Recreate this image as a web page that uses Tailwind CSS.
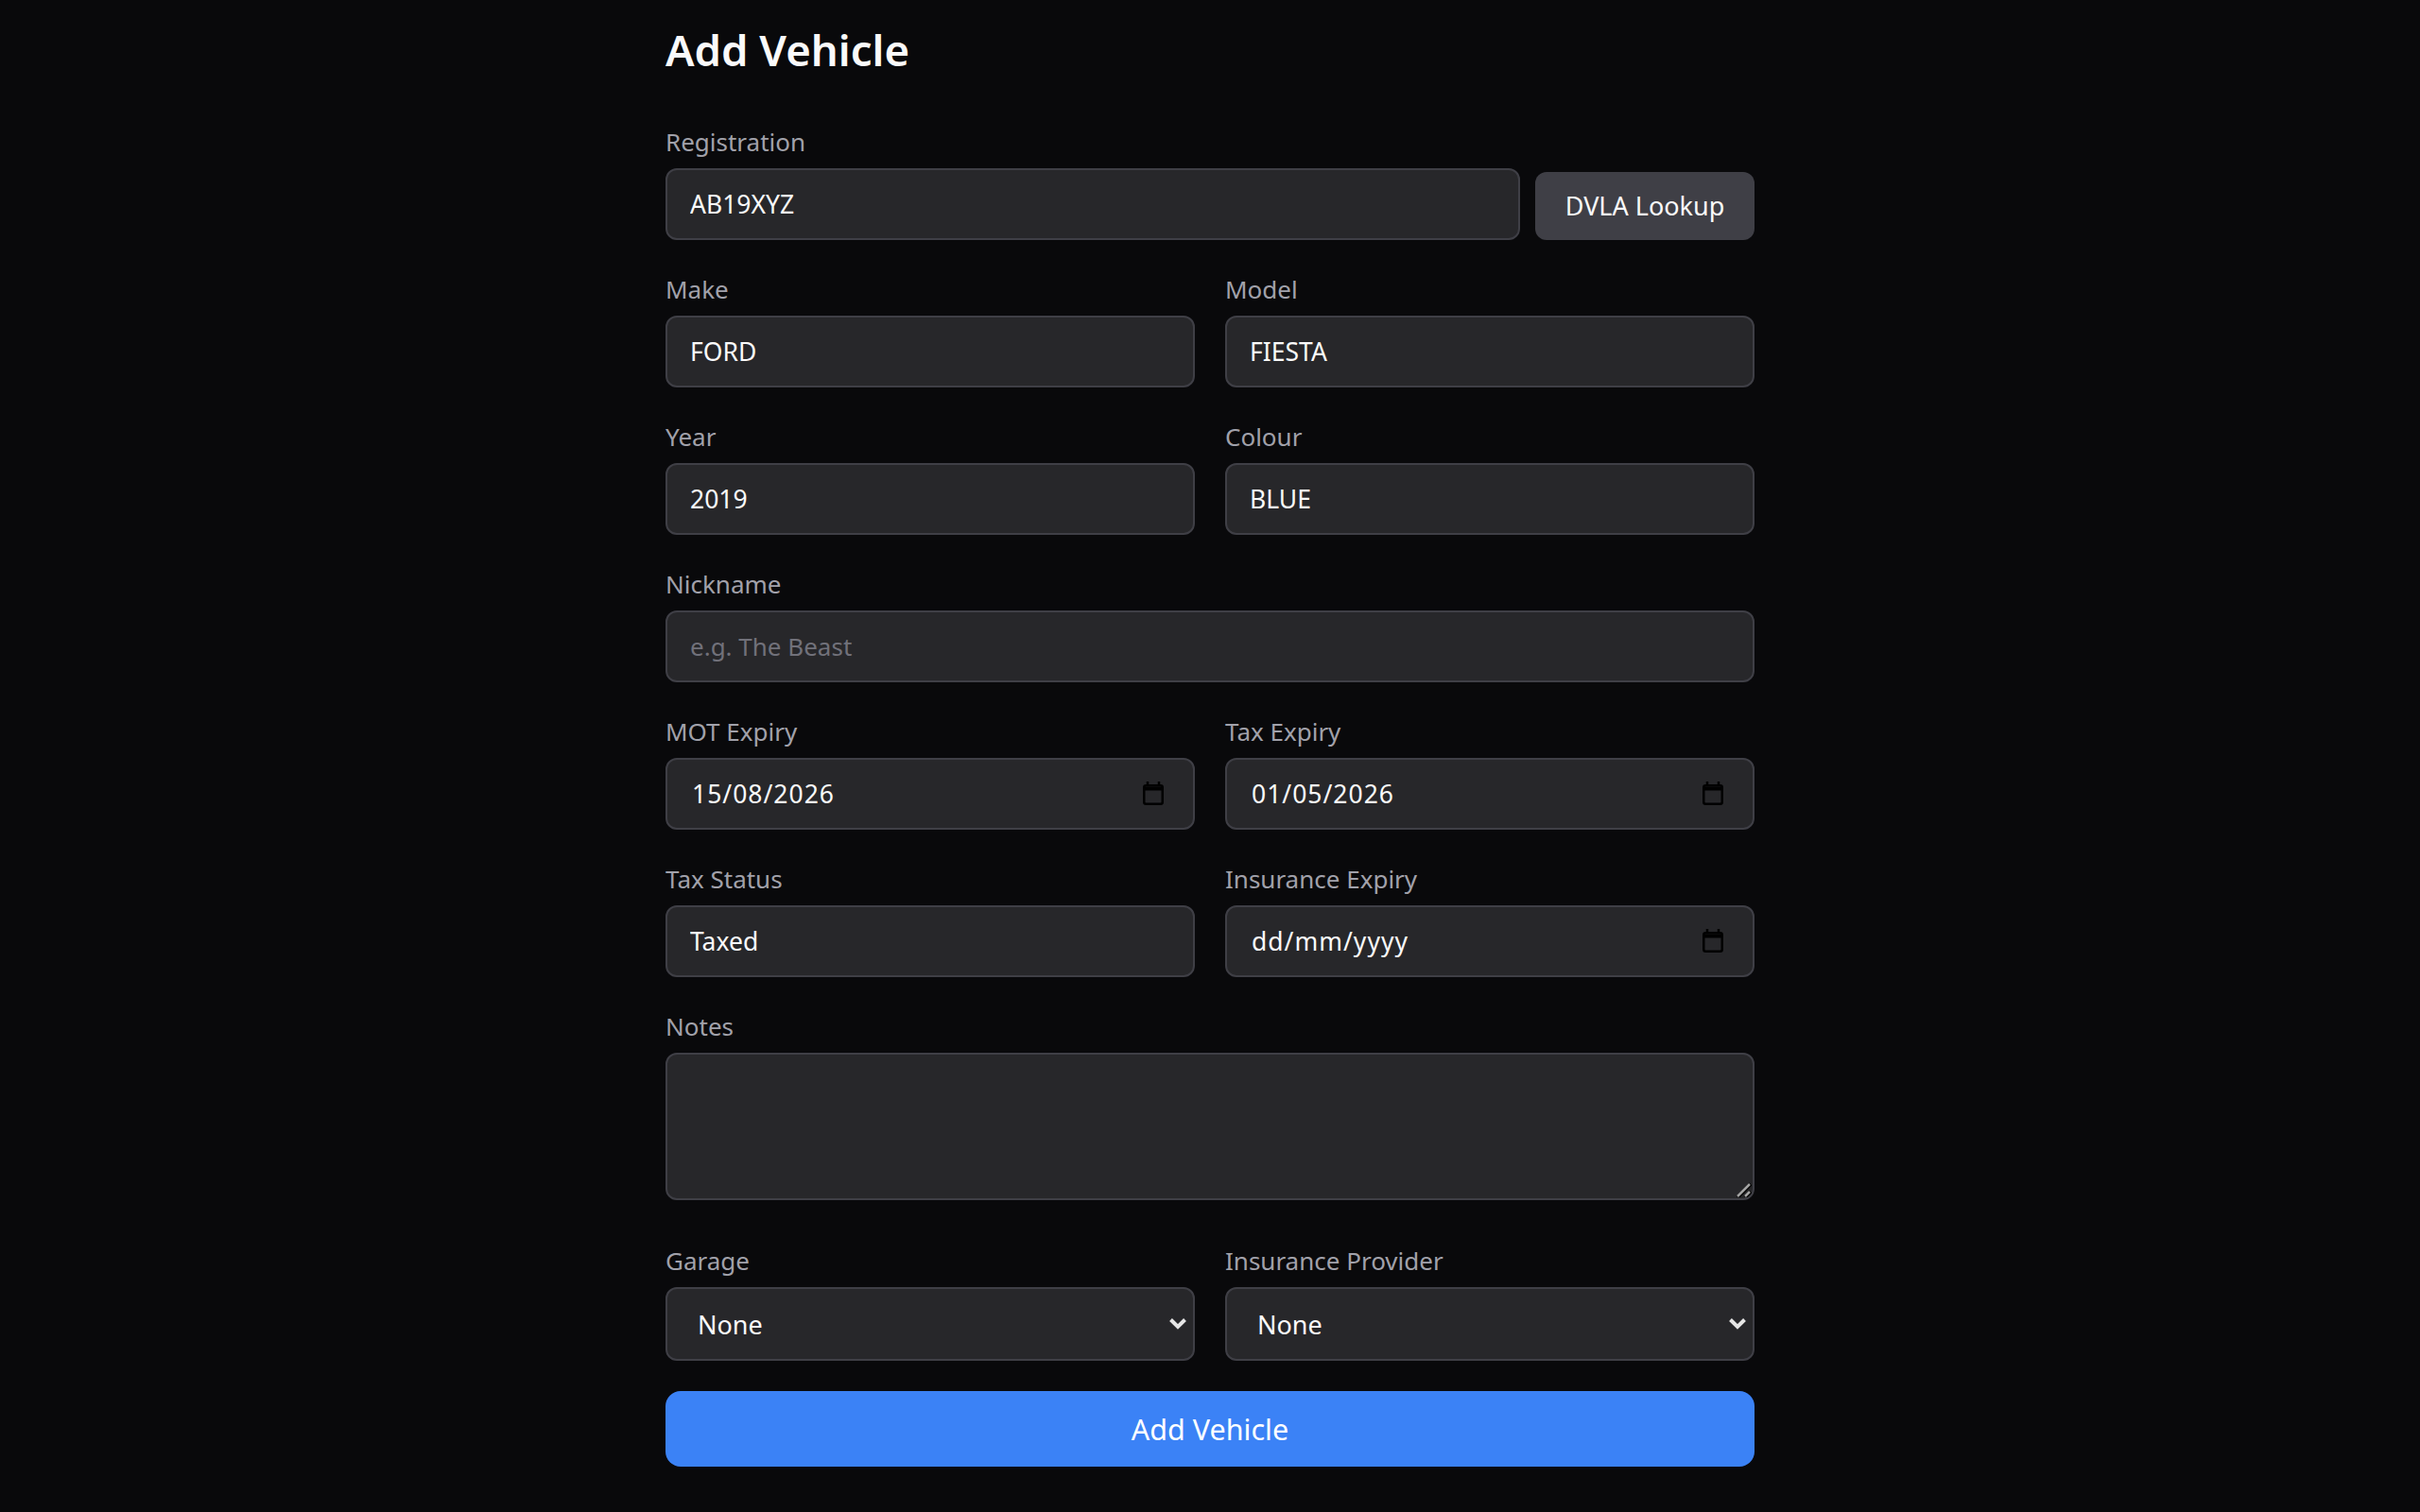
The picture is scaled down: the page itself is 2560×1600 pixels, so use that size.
<!DOCTYPE html>
<html lang="en">
<head>
    <meta charset="UTF-8">
    <meta name="viewport" content="width=device-width, initial-scale=1.0">
    <script src="https://cdn.jsdelivr.net/npm/@tailwindcss/browser@4"></script>
    <title>Add Vehicle</title>
</head>
<body class="bg-[#09090b] text-[#fafafa] font-['Noto_Sans',sans-serif] h-[1600px] overflow-hidden">
<div class="w-[1152px] mx-auto pt-[20px]">
    <h1 class="text-[45.5px] leading-[64px] font-semibold mb-[46px]">Add Vehicle</h1>

    <form class="flex flex-col gap-8">
        <div>
            <label class="block text-[26px] leading-[40px] mb-2 text-[#a1a1aa]">Registration</label>
            <div class="flex items-end gap-4">
                <input type="text" value="AB19XYZ" class="flex-1 min-w-0 h-[76px] px-6 bg-[#27272a] border-2 border-[#3f3f46] rounded-xl text-[26.5px] outline-none">
                <button type="button" class="w-[232px] h-[72px] bg-[#3f3f46] rounded-xl text-[27px] text-[#fafafa]">DVLA Lookup</button>
            </div>
        </div>

        <div class="grid grid-cols-2 gap-8">
            <div>
                <label class="block text-[26px] leading-[40px] mb-2 text-[#a1a1aa]">Make</label>
                <input type="text" value="FORD" class="w-full h-[76px] px-6 bg-[#27272a] border-2 border-[#3f3f46] rounded-xl text-[26.5px] outline-none">
            </div>
            <div>
                <label class="block text-[26px] leading-[40px] mb-2 text-[#a1a1aa]">Model</label>
                <input type="text" value="FIESTA" class="w-full h-[76px] px-6 bg-[#27272a] border-2 border-[#3f3f46] rounded-xl text-[26.5px] outline-none">
            </div>
        </div>

        <div class="grid grid-cols-2 gap-8">
            <div>
                <label class="block text-[26px] leading-[40px] mb-2 text-[#a1a1aa]">Year</label>
                <input type="text" value="2019" class="w-full h-[76px] px-6 bg-[#27272a] border-2 border-[#3f3f46] rounded-xl text-[26.5px] outline-none">
            </div>
            <div>
                <label class="block text-[26px] leading-[40px] mb-2 text-[#a1a1aa]">Colour</label>
                <input type="text" value="BLUE" class="w-full h-[76px] px-6 bg-[#27272a] border-2 border-[#3f3f46] rounded-xl text-[26.5px] outline-none">
            </div>
        </div>

        <div>
            <label class="block text-[26px] leading-[40px] mb-2 text-[#a1a1aa]">Nickname</label>
            <input type="text" placeholder="e.g. The Beast" class="w-full h-[76px] px-6 bg-[#27272a] border-2 border-[#3f3f46] rounded-xl text-[26px] outline-none placeholder:text-[#71717a]">
        </div>

        <div class="grid grid-cols-2 gap-8">
            <div>
                <label class="block text-[26px] leading-[40px] mb-2 text-[#a1a1aa]">MOT Expiry</label>
                <div class="flex items-center h-[76px] pl-[26px] pr-[31px] bg-[#27272a] border-2 border-[#3f3f46] rounded-xl">
                    <input type="text" value="15/08/2026" class="flex-1 min-w-0 pt-[2px] text-[26.5px] tracking-[1px] outline-none">
                    <svg class="w-[22px] h-[25px] mb-[1px]" viewBox="0 0 22 25" fill="none" stroke="#000"><rect x="1.25" y="4.25" width="19.5" height="19.5" rx="2" stroke-width="2.5"/><path d="M1 7.5h20" stroke-width="4"/><path d="M5 0v5M17 0v5" stroke-width="2.5"/></svg>
                </div>
            </div>
            <div>
                <label class="block text-[26px] leading-[40px] mb-2 text-[#a1a1aa]">Tax Expiry</label>
                <div class="flex items-center h-[76px] pl-[26px] pr-[31px] bg-[#27272a] border-2 border-[#3f3f46] rounded-xl">
                    <input type="text" value="01/05/2026" class="flex-1 min-w-0 pt-[2px] text-[26.5px] tracking-[1px] outline-none">
                    <svg class="w-[22px] h-[25px] mb-[1px]" viewBox="0 0 22 25" fill="none" stroke="#000"><rect x="1.25" y="4.25" width="19.5" height="19.5" rx="2" stroke-width="2.5"/><path d="M1 7.5h20" stroke-width="4"/><path d="M5 0v5M17 0v5" stroke-width="2.5"/></svg>
                </div>
            </div>
        </div>

        <div class="grid grid-cols-2 gap-8">
            <div>
                <label class="block text-[26px] leading-[40px] mb-2 text-[#a1a1aa]">Tax Status</label>
                <input type="text" value="Taxed" class="w-full h-[76px] px-6 bg-[#27272a] border-2 border-[#3f3f46] rounded-xl text-[26.5px] outline-none">
            </div>
            <div>
                <label class="block text-[26px] leading-[40px] mb-2 text-[#a1a1aa]">Insurance Expiry</label>
                <div class="flex items-center h-[76px] pl-[26px] pr-[31px] bg-[#27272a] border-2 border-[#3f3f46] rounded-xl">
                    <input type="text" value="dd/mm/yyyy" class="flex-1 min-w-0 pt-[2px] text-[26.5px] tracking-[1px] outline-none">
                    <svg class="w-[22px] h-[25px] mb-[1px]" viewBox="0 0 22 25" fill="none" stroke="#000"><rect x="1.25" y="4.25" width="19.5" height="19.5" rx="2" stroke-width="2.5"/><path d="M1 7.5h20" stroke-width="4"/><path d="M5 0v5M17 0v5" stroke-width="2.5"/></svg>
                </div>
            </div>
        </div>

        <div>
            <label class="block text-[26px] leading-[40px] mb-2 text-[#a1a1aa]">Notes</label>
            <div class="relative mb-3">
                <textarea class="block w-full h-[156px] px-6 py-3 bg-[#27272a] border-2 border-[#3f3f46] rounded-xl text-[26.5px] outline-none resize-none"></textarea>
                <svg class="absolute right-[3px] bottom-[3px] w-[16px] h-[16px] pointer-events-none" viewBox="0 0 16 16" fill="none" stroke-width="2.5"><path d="M1 16 15 2M9 16l6-6" stroke="#000" stroke-width="4"/><path d="M1 15 14 2M9 15l5-5" stroke="#a3a3a3"/></svg>
            </div>
        </div>

        <div class="grid grid-cols-2 gap-8">
            <div>
                <label class="block text-[26px] leading-[40px] mb-2 text-[#a1a1aa]">Garage</label>
                <div class="relative">
                    <select class="w-full h-[78px] pl-[32px] pr-6 pt-[2px] appearance-none bg-[#27272a] border-2 border-[#3f3f46] rounded-xl text-[27px] outline-none"><option>None</option></select>
                    <svg class="absolute right-[9px] top-[32px] w-[18px] h-[13px] pointer-events-none" viewBox="0 0 18 13" fill="none" stroke="#e5e5e5" stroke-width="4"><path d="M1.5 2.5 9 10l7.5-7.5"/></svg>
                </div>
            </div>
            <div>
                <label class="block text-[26px] leading-[40px] mb-2 text-[#a1a1aa]">Insurance Provider</label>
                <div class="relative">
                    <select class="w-full h-[78px] pl-[32px] pr-6 pt-[2px] appearance-none bg-[#27272a] border-2 border-[#3f3f46] rounded-xl text-[27px] outline-none"><option>None</option></select>
                    <svg class="absolute right-[9px] top-[32px] w-[18px] h-[13px] pointer-events-none" viewBox="0 0 18 13" fill="none" stroke="#e5e5e5" stroke-width="4"><path d="M1.5 2.5 9 10l7.5-7.5"/></svg>
                </div>
            </div>
        </div>

        <button type="button" class="w-full h-[80px] pt-[1px] bg-[#3b82f6] rounded-2xl text-[30.5px] text-white">Add Vehicle</button>
    </form>
</div>
</body>
</html>
